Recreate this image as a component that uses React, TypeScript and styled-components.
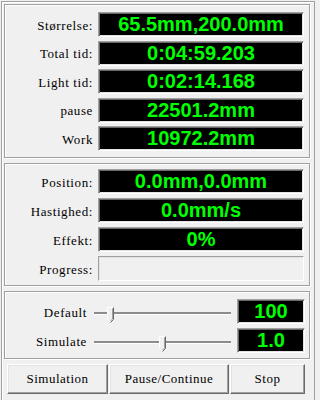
import React from 'react';
import styled, { createGlobalStyle } from 'styled-components';

const GlobalStyle = createGlobalStyle`
  html, body {
    margin: 0;
    padding: 0;
    background: #f0f0f0;
    font-family: "Liberation Serif", "DejaVu Serif", serif;
  }
`;

const Frame = styled('div')`
  box-sizing: border-box;
  width: 314px;
  height: 399px;
  margin: 1px 0 0 1px;
  padding: 2px 4px 0 2px;
  border: 1px solid #a0a0a0;
  border-bottom: none;
  box-shadow: inset 1px 1px 0 #fff;
  display: flex;
  flex-direction: column;
  overflow: hidden;
`;

const Group = styled('div')<{ $top: number; $bottom: number; $gap: number }>`
  box-sizing: border-box;
  border: 1px solid #a0a0a0;
  box-shadow: 1px 1px 0 #fff, inset 1px 1px 0 #fff;
  padding: ${(p) => p.$top}px 0 ${(p) => p.$bottom}px;
  margin-bottom: 5px;
  display: flex;
  flex-direction: column;
  gap: ${(p) => p.$gap}px;
`;

const Row = styled('div')`
  display: grid;
  grid-template-columns: 88px 206px;
  column-gap: 5px;
  height: 25px;
`;

const SliderRow = styled('div')`
  display: grid;
  grid-template-columns: 82px 137px 67px;
  column-gap: 7px;
  height: 25px;

  & > :last-child {
    margin-left: -1px;
  }
`;

const Label = styled('span')`
  font-size: 13px;
  letter-spacing: 0.6px;
  color: #000;
  text-align: right;
  white-space: nowrap;
  align-self: center;
  padding-top: 2px;
`;

const Sunken = styled('div')`
  box-sizing: border-box;
  border: 1px solid;
  border-color: #a0a0a0 #fff #fff #a0a0a0;
  box-shadow: inset 1px 1px 0 #696969, inset -1px -1px 0 #e3e3e3;
`;

const Value = styled(Sunken)`
  background: #000;
  color: #00ff00;
  font-family: "Liberation Sans", Arial, sans-serif;
  font-weight: bold;
  font-size: 20px;
  line-height: 23px;
  text-align: center;
  white-space: nowrap;
  overflow: hidden;
`;

const Progress = styled(Sunken)`
  background: #f0f0f0;
  box-shadow: inset 1px 1px 0 #e3e3e3;
`;

const Slider = styled('div')`
  position: relative;
  height: 25px;
`;

const Track = styled('div')`
  position: absolute;
  left: 0;
  right: 0;
  top: 13px;
  height: 2px;
  background: #8c8c8c;
  border-bottom: 1px solid #fff;
`;

const Thumb = styled('svg')`
  position: absolute;
  top: 8px;
`;

const Buttons = styled('div')`
  display: flex;
  gap: 1px;
  padding-left: 3px;
`;

const Button = styled('button')<{ $w: number }>`
  box-sizing: border-box;
  width: ${(p) => p.$w}px;
  height: 30px;
  padding: 0;
  font-family: inherit;
  font-size: 13px;
  letter-spacing: 0.5px;
  color: #000;
  background: #f0f0f0;
  border: 1px solid;
  border-color: #fff #696969 #696969 #fff;
  box-shadow: inset -1px -1px 0 #a0a0a0, inset 1px 1px 0 #e3e3e3;
`;

const info = [
  { label: 'Størrelse:', value: '65.5mm,200.0mm' },
  { label: 'Total tid:', value: '0:04:59.203' },
  { label: 'Light tid:', value: '0:02:14.168' },
  { label: 'pause', value: '22501.2mm' },
  { label: 'Work', value: '10972.2mm' },
];

const status = [
  { label: 'Position:', value: '0.0mm,0.0mm' },
  { label: 'Hastighed:', value: '0.0mm/s' },
  { label: 'Effekt:', value: '0%' },
];

const sliders = [
  { label: 'Default', value: '100', pos: 0.1 },
  { label: 'Simulate', value: '1.0', pos: 0.5 },
];

function SliderThumb({ pos }: { pos: number }) {
  const left = Math.round(pos * 130);
  return (
    <Thumb width="7" height="16" viewBox="0 0 7 16" style={{ left }}>
      <path d="M0.5 0.5 H6.5 V12.5 L3.5 15.5 L0.5 12.5 Z" fill="#f0f0f0" />
      <path d="M0.5 12.5 V0.5 H6" stroke="#fff" fill="none" />
      <path d="M6.5 0.5 V12.5 L3.5 15.5" stroke="#696969" fill="none" />
      <path d="M5.5 1.5 V12 L3.5 14" stroke="#a0a0a0" fill="none" />
    </Thumb>
  );
}

export default function App() {
  return (
    <>
      <GlobalStyle />
      <Frame>
        <Group $top={7} $bottom={6} $gap={3.5}>
          {info.map((r) => (
            <Row key={r.label}>
              <Label>{r.label}</Label>
              <Value>{r.value}</Value>
            </Row>
          ))}
        </Group>

        <Group $top={5} $bottom={4} $gap={4}>
          {status.map((r) => (
            <Row key={r.label}>
              <Label>{r.label}</Label>
              <Value>{r.value}</Value>
            </Row>
          ))}
          <Row>
            <Label>Progress:</Label>
            <Progress />
          </Row>
        </Group>

        <Group $top={7} $bottom={5} $gap={4}>
          {sliders.map((s) => (
            <SliderRow key={s.label}>
              <Label>{s.label}</Label>
              <Slider>
                <Track />
                <SliderThumb pos={s.pos} />
              </Slider>
              <Value>{s.value}</Value>
            </SliderRow>
          ))}
        </Group>

        <Buttons>
          <Button $w={101}>Simulation</Button>
          <Button $w={120}>Pause/Continue</Button>
          <Button $w={75}>Stop</Button>
        </Buttons>
      </Frame>
    </>
  );
}
